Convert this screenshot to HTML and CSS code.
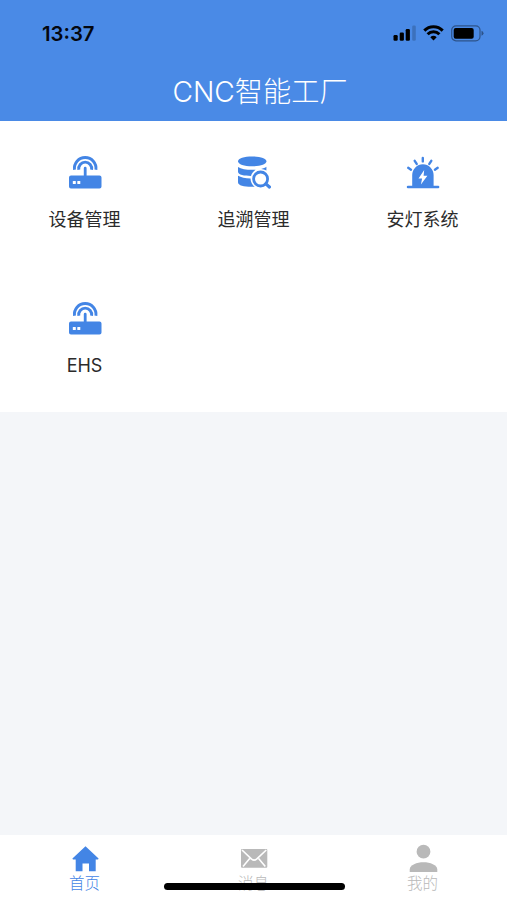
FILE: index.html
```html
<!DOCTYPE html>
<html lang="zh-CN">
<head>
    <meta charset="UTF-8">
    <meta name="viewport" content="width=device-width, initial-scale=1.0">
    <title>CNC智能工厂</title>
    <link rel="stylesheet" href="styles.css">
</head>
<body>

    <!-- 公用图标 -->
    <svg class="sprite" width="0" height="0">
        <symbol id="router" viewBox="0.700 0 34 34">
            <path d="M7.200 14.800A10.800 10.800 0 1 1 28.600 14.800M11.500 14.800A6.500 6.500 0 1 1 24.300 14.800" fill="none" stroke="currentColor" stroke-width="2.900"/>
            <path d="M16.500 13.200a1.400 1.400 0 0 1 2.800 0V20.600h12.900a2 2 0 0 1 2 2v8.900a2 2 0 0 1-2 2H3.700a2 2 0 0 1-2-2V22.600a2 2 0 0 1 2-2h12.800z" fill="currentColor"/>
            <rect x="5.500" y="26" width="3" height="3" rx="0.500" fill="#fff"/>
            <rect x="10" y="26" width="3" height="3" rx="0.500" fill="#fff"/>
        </symbol>
    </svg>

    <header class="header">
        <div class="status-bar">
            <span class="time">13:37</span>
            <div class="status-icons">
                <svg class="signal" width="23" height="16" viewBox="0 0 23 16">
                    <rect x="0.500" y="10" width="4.200" height="5.700" rx="1.200"/>
                    <rect x="6.700" y="7.500" width="4.200" height="8.200" rx="1.200"/>
                    <rect x="12.700" y="4" width="4.200" height="11.700" rx="1.200"/>
                    <rect x="19.200" y="0.500" width="3.600" height="15.200" rx="1.200" opacity="0.180"/>
                </svg>
                <svg class="wifi" width="21" height="16" viewBox="0 0 21 16">
                    <path d="M1.300 5.600a13 13 0 0 1 18.400 0M4.600 9.300a8.300 8.300 0 0 1 11.800 0" fill="none" stroke="#000" stroke-width="3"/>
                    <path d="M10.500 15.400L7.300 12.300a4.700 4.700 0 0 1 6.400 0z"/>
                </svg>
                <svg class="battery" width="33" height="17" viewBox="0 0 33 17">
                    <rect x="0.700" y="0.800" width="28.300" height="15" rx="4.300" fill="none" stroke="#000" stroke-width="1.200" opacity="0.400"/>
                    <rect x="2.700" y="2.900" width="20" height="10.800" rx="2"/>
                    <path d="M30.500 5.800q2 .8 2 2.500t-2 2.500z" opacity="0.400"/>
                </svg>
            </div>
        </div>
        <h1 class="title">CNC智能工厂</h1>
    </header>

    <main class="menu">
        <a class="menu-item">
            <svg class="menu-icon"><use href="#router"/></svg>
            <span>设备管理</span>
        </a>
        <a class="menu-item">
            <svg class="menu-icon" viewBox="0 0 34 34">
                <path d="M1 6.300C1 3.200 7.200 1.400 15.200 1.400s14.200 1.800 14.200 4.900-6.200 5-14.200 5S1 9.400 1 6.300z"/>
                <path d="M1 11.900c3 2 8 2.900 14.200 2.900 1.200 0 2.400 0 3.500-.1-2.300 1.400-4 3.600-4.700 6.200C7.500 20.800 1 19.800 1 16.700z"/>
                <path d="M1 20.800c2.900 1.700 7.200 2.500 12.500 2.600.1 3.500 1.700 6.400 4.200 8.300C9 32.100 1 31 1 27.200z"/>
                <path d="M29.400 11.700v3.800c-1.600-1-3.400-1.500-5.300-1.600 2.200-.5 4-1.200 5.300-2.200z"/>
                <circle cx="23.600" cy="24" r="7" fill="none" stroke="currentColor" stroke-width="2.800"/>
                <path d="M28.900 28.900l3.500 3.100" fill="none" stroke="currentColor" stroke-width="3.200" stroke-linecap="round"/>
            </svg>
            <span>追溯管理</span>
        </a>
        <a class="menu-item">
            <svg class="menu-icon" viewBox="0.700 0 34 34">
                <path d="M6.900 30.800V20a10.700 10.700 0 0 1 21.400 0v10.800h4.500a1.250 1.250 0 0 1 0 2.500H2.700a1.250 1.250 0 0 1 0-2.500z"/>
                <path d="M18.900 15l-5.700 8.400h3.600l-1.200 6 6.500-8.600h-3.800z" fill="#fff"/>
                <path d="M2.900 12.800l2.800 1.900M9.400 5.800l2 3.100M17.500 3v3.400M26 5.800l-2 3.100M32.400 12.800l-2.800 1.900" fill="none" stroke="currentColor" stroke-width="2.400" stroke-linecap="round"/>
            </svg>
            <span>安灯系统</span>
        </a>
        <a class="menu-item">
            <svg class="menu-icon"><use href="#router"/></svg>
            <span>EHS</span>
        </a>
    </main>

    <nav class="tab-bar">
        <a class="tab active">
            <svg class="tab-icon" viewBox="0 0 30 30">
                <path d="M15.500 2.300L28.300 14.300a.7.7 0 0 1-.5 1.200H25.700v11.700H19v-7.800H12.500v7.800H5.700V15.500H3.200a.7.7 0 0 1-.5-1.200z"/>
            </svg>
            <span>首页</span>
        </a>
        <a class="tab">
            <svg class="tab-icon" viewBox="0 0 30 30">
                <rect x="2" y="5" width="26.300" height="18.800" rx="1"/>
                <path d="M3 6l9.600 9.100q2.500 2 5 0L27.300 6M4 22.400l6.700-7.800M26.300 22.400l-6.700-7.800" fill="none" stroke="#fff" stroke-width="1.600"/>
            </svg>
            <span>消息</span>
        </a>
        <a class="tab">
            <svg class="tab-icon" viewBox="0 0 30 30">
                <circle cx="15.500" cy="7.700" r="6.900"/>
                <path d="M1.700 28v-2.600c0-4.500 7.200-7.200 13.800-7.200s13.800 2.700 13.800 7.200V28z"/>
            </svg>
            <span>我的</span>
        </a>
        <div class="home-indicator"></div>
    </nav>

</body>
</html>
```

FILE: styles.css
```css
* {
    box-sizing: border-box;
}
body {
    margin: 0;
    height: 100vh;
    display: flex;
    flex-direction: column;
    background-color: #f4f6f9;
    font-family: Inter, 'Noto Sans CJK SC', sans-serif;
    color: #2b2b2b;
    overflow: hidden;
}
.sprite {
    position: absolute;
}

/* 顶部 */
.header {
    height: 121px;
    background-color: #4a8ae6;
}
.status-bar {
    display: flex;
    justify-content: space-between;
    align-items: center;
    height: 66px;
    padding: 0 23px 0 42px;
}
.time {
    padding-top: 1px;
    font-size: 20.3px;
    font-weight: 600;
    color: #04070f;
}
.status-icons {
    display: flex;
    align-items: center;
    gap: 7px;
}
.title {
    margin: 0;
    padding-left: 13px;
    height: 50px;
    line-height: 52px;
    text-align: center;
    font-size: 28.2px;
    font-weight: 300;
    color: #fff;
}

/* 功能菜单 */
.menu {
    display: grid;
    grid-template-columns: repeat(3, 1fr);
    grid-auto-rows: 145.5px;
    background-color: #fff;
}
.menu-item {
    display: flex;
    flex-direction: column;
    align-items: center;
    padding-top: 34px;
    font-size: 18px;
    line-height: 26px;
}
.menu-icon {
    width: 34px;
    height: 34px;
    margin-bottom: 18px;
    color: #4385e5;
    fill: currentColor;
}

/* 底部导航 */
.tab-bar {
    position: relative;
    display: flex;
    height: 65px;
    margin-top: auto;
    background-color: #fff;
}
.tab {
    flex: 1;
    display: flex;
    flex-direction: column;
    align-items: center;
    padding-top: 9px;
    font-size: 15.5px;
    font-weight: 300;
    line-height: 20px;
    color: #b9b9b9;
}
.tab-icon {
    width: 30px;
    height: 30px;
    fill: currentColor;
}
.active {
    color: #4385e5;
}
.home-indicator {
    position: absolute;
    left: 164px;
    bottom: 10px;
    width: 181px;
    height: 7px;
    border-radius: 4px;
    background-color: #000;
}
```
